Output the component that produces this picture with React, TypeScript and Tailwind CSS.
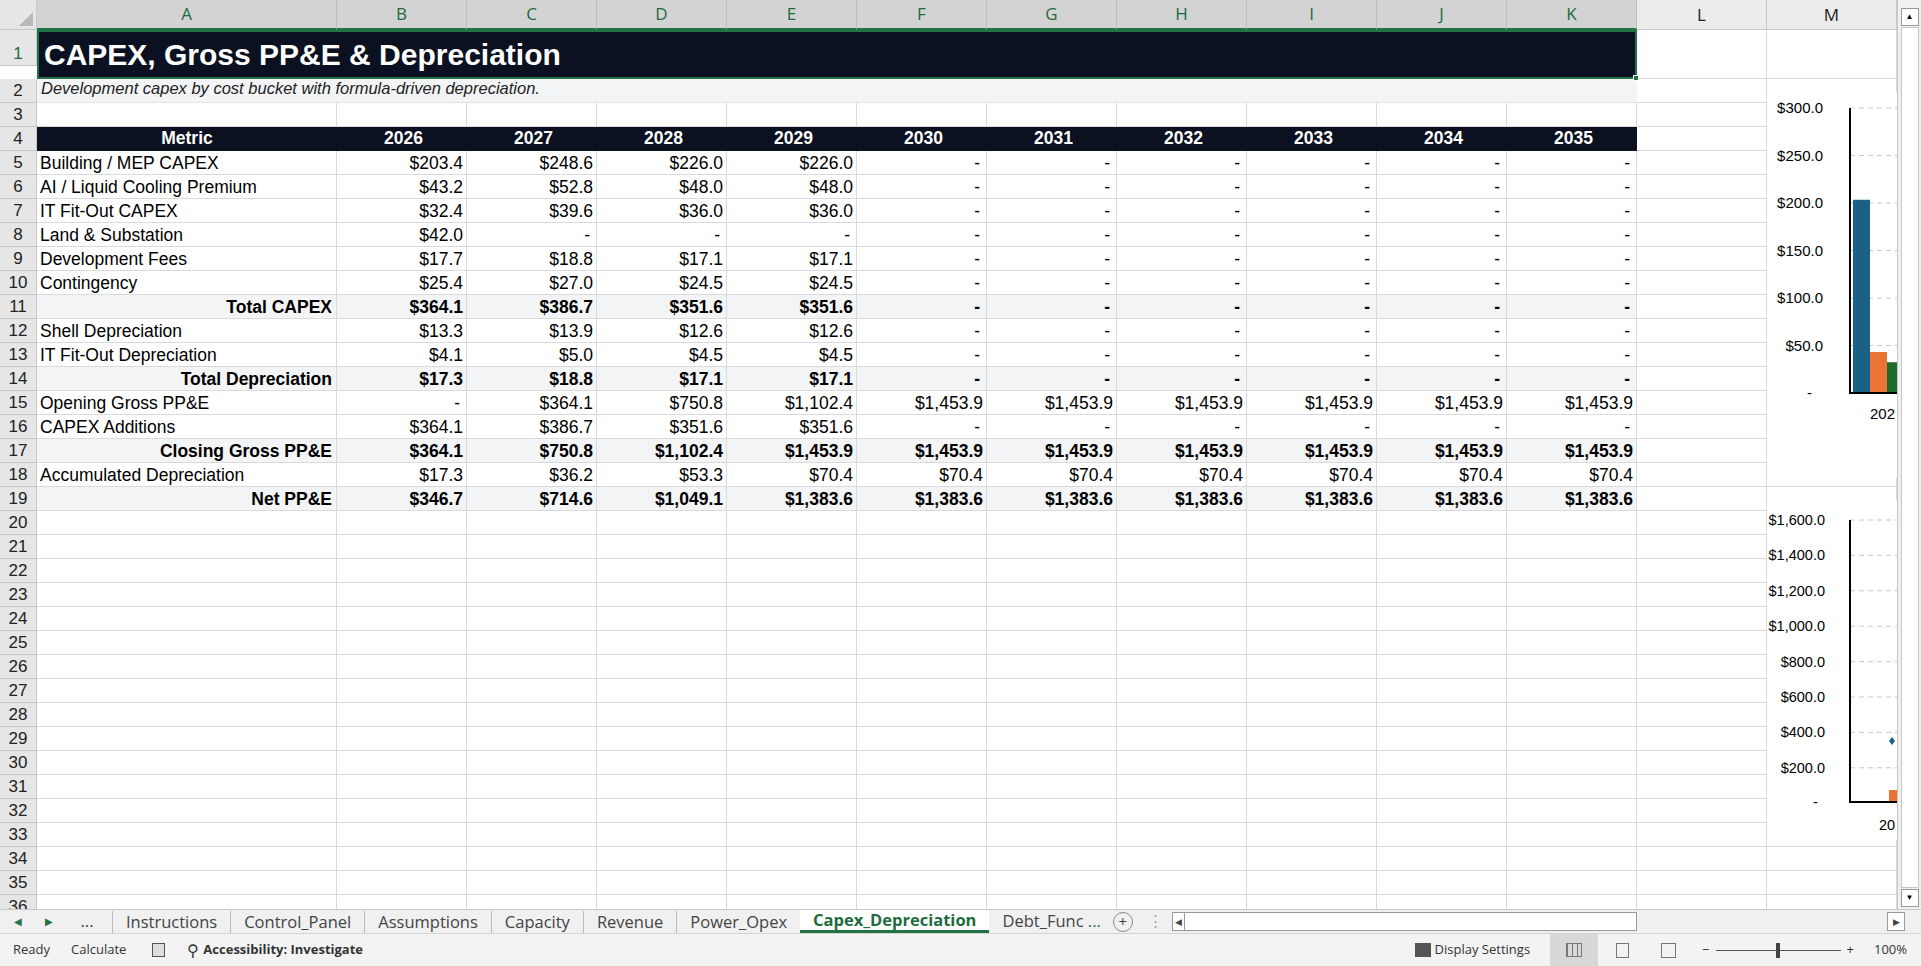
import React from "react";

const COLS = ["A","B","C","D","E","F","G","H","I","J","K","L","M"];
const W = (i: number) => (i === 0 ? 300 : 130);
const D = "-";
const six = (v: string) => Array(6).fill(v);
type R = { n: number; label: string; vals: string[]; bold?: boolean };
const rows: R[] = [
  { n: 5, label: "Building / MEP CAPEX", vals: ["$203.4","$248.6","$226.0","$226.0",...six(D)] },
  { n: 6, label: "AI / Liquid Cooling Premium", vals: ["$43.2","$52.8","$48.0","$48.0",...six(D)] },
  { n: 7, label: "IT Fit-Out CAPEX", vals: ["$32.4","$39.6","$36.0","$36.0",...six(D)] },
  { n: 8, label: "Land & Substation", vals: ["$42.0",D,D,D,...six(D)] },
  { n: 9, label: "Development Fees", vals: ["$17.7","$18.8","$17.1","$17.1",...six(D)] },
  { n: 10, label: "Contingency", vals: ["$25.4","$27.0","$24.5","$24.5",...six(D)] },
  { n: 11, label: "Total CAPEX", bold: true, vals: ["$364.1","$386.7","$351.6","$351.6",...six(D)] },
  { n: 12, label: "Shell Depreciation", vals: ["$13.3","$13.9","$12.6","$12.6",...six(D)] },
  { n: 13, label: "IT Fit-Out Depreciation", vals: ["$4.1","$5.0","$4.5","$4.5",...six(D)] },
  { n: 14, label: "Total Depreciation", bold: true, vals: ["$17.3","$18.8","$17.1","$17.1",...six(D)] },
  { n: 15, label: "Opening Gross PP&E", vals: [D,"$364.1","$750.8","$1,102.4",...six("$1,453.9")] },
  { n: 16, label: "CAPEX Additions", vals: ["$364.1","$386.7","$351.6","$351.6",...six(D)] },
  { n: 17, label: "Closing Gross PP&E", bold: true, vals: ["$364.1","$750.8","$1,102.4","$1,453.9",...six("$1,453.9")] },
  { n: 18, label: "Accumulated Depreciation", vals: ["$17.3","$36.2","$53.3","$70.4",...six("$70.4")] },
  { n: 19, label: "Net PP&E", bold: true, vals: ["$346.7","$714.6","$1,049.1","$1,383.6",...six("$1,383.6")] },
];

function RowNum({ n, h }: { n: number; h: number }) {
  return (
    <div className={`w-[37px] shrink-0 bg-[#e6e6e6] border-r border-b border-[#c8c8c8] flex items-end justify-center text-[17px] ${n === 1 ? "text-[#1d6b3e]" : "text-[#222]"}`} style={{ height: h }}>
      <span className="leading-[22px]">{n}</span>
    </div>
  );
}

function Blank({ from = 0 }: { from?: number }) {
  return (
    <>
      {COLS.slice(from).map((c, i) => (
        <div key={c} className="shrink-0 border-r border-b border-[#dadada]" style={{ width: W(i + from) }} />
      ))}
    </>
  );
}

export default function App() {
  const font = { fontFamily: '"Liberation Sans", Arial, sans-serif' };
  const tabs = ["Instructions","Control_Panel","Assumptions","Capacity","Revenue","Power_Opex"];
  const cal = '"Liberation Sans", Calibri, sans-serif';
  return (
    <div className="w-[1921px] h-[966px] overflow-hidden bg-white relative flex flex-col" style={font}>
      <div className="flex flex-1 min-h-0">
        <div className="flex-1 flex flex-col relative overflow-hidden">
          <div className="flex h-[30px] shrink-0">
            <div className="w-[37px] bg-[#e6e6e6] border-r border-b border-[#c8c8c8] relative">
              <div className="absolute right-[3px] bottom-[3px] w-0 h-0 border-l-[14px] border-l-transparent border-b-[14px] border-b-[#b8b8b8]" />
            </div>
            {COLS.map((c, i) => (
              <div key={c} className={`shrink-0 flex items-center justify-center text-[17px] border-r ${i < 11 ? "bg-[#d3d3d3] text-[#1d6b3e] border-[#bdbdbd] border-b-2 border-b-[#217346]" : "bg-[#ececec] text-[#222] border-[#c8c8c8] border-b"}`} style={{ width: W(i), fontFamily: '"Open Sans",sans-serif' }}>{c}</div>
            ))}
          </div>
          <div className="flex shrink-0">
            <RowNum n={1} h={36} />
            <div className="w-[1600px] shrink-0 bg-[#0b1120] text-white font-bold text-[30px] flex items-center pl-[5px] border-2 border-[#217346] relative">
              CAPEX, Gross PP&amp;E &amp; Depreciation
              <div className="absolute -right-[4px] -bottom-[4px] w-[6px] h-[6px] bg-[#217346] border border-white" />
            </div>
            <Blank from={11} />
          </div>
          <div className="flex shrink-0 h-[24px]">
            <RowNum n={2} h={24} />
            <div className="w-[1600px] shrink-0 bg-[#f3f4f6] italic text-[16.5px] text-[#222] flex items-end pb-[1px] pl-[4px] border-b border-[#e4e4e4]">Development capex by cost bucket with formula-driven depreciation.</div>
            <Blank from={11} />
          </div>
          <div className="flex shrink-0 h-[24px]"><RowNum n={3} h={24} /><Blank /></div>
          <div className="flex shrink-0 h-[24px]">
            <RowNum n={4} h={24} />
            <div className="flex bg-[#0b1120] text-white font-bold text-[17.5px]">
              <div className="w-[300px] flex items-end justify-center">Metric</div>
              {["2026","2027","2028","2029","2030","2031","2032","2033","2034","2035"].map(y => (
                <div key={y} className="w-[130px] flex items-end justify-end pr-[44px]">{y}</div>
              ))}
            </div>
            <Blank from={11} />
          </div>
          {rows.map(r => (
            <div key={r.n} className="flex shrink-0 h-[24px]">
              <RowNum n={r.n} h={24} />
              <div className={`w-[300px] shrink-0 flex items-end text-[17.5px] leading-[22px] text-black border-r border-b border-[#dadada] ${r.bold ? "bg-[#f3f4f6] font-bold justify-end pr-[4px]" : "pl-[3px]"}`}>{r.label}</div>
              {r.vals.map((v, i) => (
                <div key={i} className={`w-[130px] shrink-0 flex items-end justify-end text-[17.5px] leading-[22px] text-black border-r border-b border-[#dadada] ${v === D ? "pr-[6px]" : "pr-[3px]"} ${r.bold ? "bg-[#f3f4f6] font-bold" : ""}`}>{v}</div>
              ))}
              <Blank from={11} />
            </div>
          ))}
          {Array.from({ length: 17 }, (_, k) => k + 20).map(n => (
            <div key={n} className="flex shrink-0 h-[24px]"><RowNum n={n} h={24} /><Blank /></div>
          ))}

          <div className="absolute left-[1767px] top-[92px] w-[130px] h-[386px] bg-white">
            <svg width="130" height="386">
              {[0,1,2,3,4,5].map(i => {
                const y = 16 + i * 47.5;
                return <g key={i}><line x1="83" x2="130" y1={y} y2={y} stroke="#c8c8c8" strokeDasharray="5 4" /><text x="56" y={y + 5} textAnchor="end" fontSize="15" fontFamily={cal}>{["$300.0","$250.0","$200.0","$150.0","$100.0","$50.0"][i]}</text></g>;
              })}
              <text x="40" y="306" fontSize="15">-</text>
              <rect x="86" y={301 - 203.4 * 0.95} width="17" height={203.4 * 0.95} fill="#1a6185" />
              <rect x="103" y={301 - 43.2 * 0.95} width="17" height={43.2 * 0.95} fill="#e97434" />
              <rect x="120" y={301 - 32.4 * 0.95} width="10" height={32.4 * 0.95} fill="#1c6b2a" />
              <line x1="83" x2="83" y1="16" y2="302" stroke="#000" strokeWidth="2" />
              <line x1="82" x2="130" y1="301" y2="301" stroke="#000" strokeWidth="2" />
              <text x="103" y="327" fontSize="15" fontFamily={cal}>202</text>
            </svg>
          </div>
          <div className="absolute left-[1767px] top-[500px] w-[130px] h-[340px] bg-white">
            <svg width="130" height="340">
              {Array.from({ length: 8 }, (_, i) => {
                const y = 20 + i * 35.4;
                const v = (1600 - i * 200).toLocaleString("en-US") + ".0";
                return <g key={i}><line x1="83" x2="130" y1={y} y2={y} stroke="#c8c8c8" strokeDasharray="5 4" /><text x="58" y={y + 5} textAnchor="end" fontSize="14.5" fontFamily={cal}>${v}</text></g>;
              })}
              <text x="46" y="307" fontSize="14.5">-</text>
              <rect x="122" y="290" width="8" height="12" fill="#e97434" />
              <polygon points="125,237 128,241 125,245 122,241" fill="#1a6185" />
              <line x1="83" x2="83" y1="20" y2="303" stroke="#000" strokeWidth="2" />
              <line x1="82" x2="130" y1="302" y2="302" stroke="#000" strokeWidth="2" />
              <text x="112" y="330" fontSize="14.5" fontFamily={cal}>20</text>
            </svg>
          </div>
        </div>
        <div className="w-[24px] shrink-0 bg-[#f0f0f0] border-l border-[#c8c8c8] flex flex-col items-center pt-[8px] pb-[2px]">
          <div className="w-[18px] h-[18px] bg-white border border-[#999] flex items-center justify-center text-[8px]">▲</div>
          <div className="w-[18px] flex-1 bg-white border border-[#c8c8c8] my-[1px]" />
          <div className="w-[18px] h-[18px] bg-white border border-[#999] flex items-center justify-center text-[8px]">▼</div>
        </div>
      </div>
      <div className="h-[24px] shrink-0 bg-[#f0f0f0] border-t border-[#c8c8c8] flex items-center text-[16.5px] text-[#444]" style={{ fontFamily: '"Open Sans",sans-serif' }}>
        <span className="w-[36px] text-center text-[#217346] text-[10px]">◀</span>
        <span className="w-[26px] text-center text-[#217346] text-[10px]">▶</span>
        <span className="w-[50px] text-center">...</span>
        {tabs.map(t => <span key={t} className="px-[13px] border-l border-[#bbb] leading-[22px]">{t}</span>)}
        <span className="px-[13px] bg-white text-[#1d6b3e] font-bold border-b-[3px] border-[#217346] h-full flex items-center">Capex_Depreciation</span>
        <span className="pl-[13px] pr-[6px]">Debt_Func <span className="text-[#217346]">...</span></span>
        <span className="w-[20px] h-[20px] rounded-full border border-[#888] flex items-center justify-center text-[15px] mx-[6px] leading-none">+</span>
        <span className="mx-[8px] text-[#aaa]">⋮</span>
        <div className="w-[465px] h-[19px] bg-white border border-[#999] flex items-center"><span className="w-[12px] text-[9px] border-r border-[#999] h-full flex items-center justify-center">◀</span></div>
        <div className="flex-1" />
        <div className="w-[18px] h-[19px] bg-white border border-[#999] mr-[16px] text-[9px] flex items-center justify-center">▶</div>
      </div>
      <div className="h-[33px] shrink-0 bg-[#f3f3f3] border-t border-[#d4d4d4] flex items-center text-[13px] text-[#333]" style={{ fontFamily: '"Open Sans",sans-serif' }}>
        <span className="ml-[13px]">Ready</span>
        <span className="ml-[21px]">Calculate</span>
        <span className="ml-[26px] w-[13px] h-[14px] border border-[#555] bg-[#ddd]" />
        <span className="ml-[22px] text-[16px]">⚲</span>
        <span className="ml-[4px] font-bold">Accessibility: Investigate</span>
        <div className="flex-1" />
        <span className="w-[16px] h-[14px] bg-[#555] mr-[4px]" />
        <span>Display Settings</span>
        <div className="ml-[20px] w-[48px] h-full bg-[#d8d8d8] flex items-center justify-center"><span className="w-[16px] h-[14px] border border-[#777] bg-[repeating-linear-gradient(90deg,#777_0_1px,transparent_1px_5px)]" /></div>
        <span className="ml-[18px] w-[13px] h-[15px] border border-[#777]" />
        <span className="ml-[32px] w-[15px] h-[15px] border border-[#777]" />
        <span className="ml-[26px]">−</span>
        <div className="ml-[6px] w-[125px] h-[1px] bg-[#555] relative"><div className="absolute left-[60px] -top-[7px] w-[4px] h-[15px] bg-[#444]" /></div>
        <span className="ml-[6px]">+</span>
        <span className="ml-[20px] mr-[14px]">100%</span>
      </div>
    </div>
  );
}
